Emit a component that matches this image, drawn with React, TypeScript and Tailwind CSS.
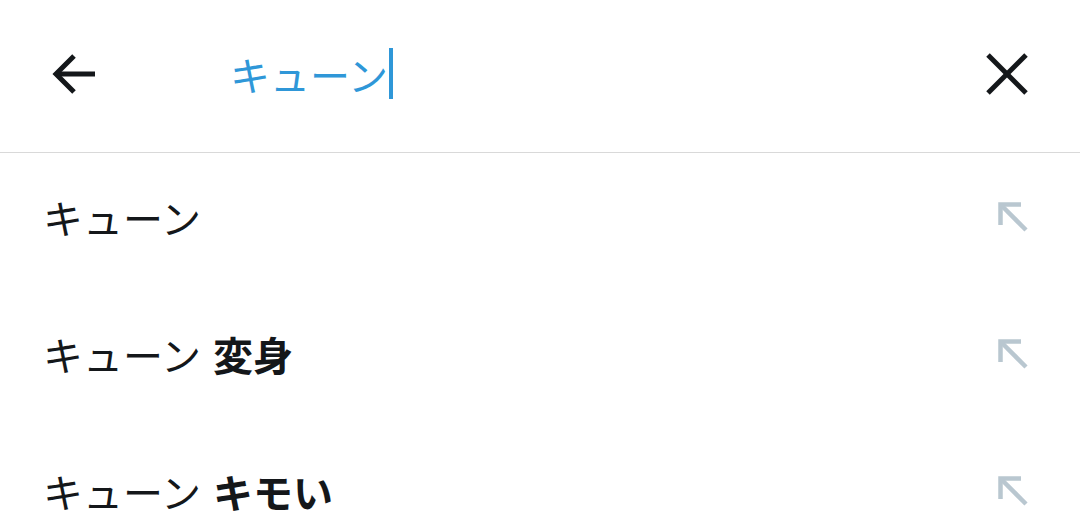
const suggestions: { base: string; extra?: string }[] = [
  { base: 'キューン' },
  { base: 'キューン', extra: '変身' },
  { base: 'キューン', extra: 'キモい' },
];

const font = { fontFamily: '"Noto Sans CJK JP", "Noto Sans", sans-serif' };

function ArrowUpLeft() {
  return (
    <svg width="32" height="32" viewBox="0 0 32 32" fill="none" stroke="#b9c7d0" strokeWidth="4.5">
      <path d="M3.5 24V3.5H24" />
      <path d="M3.5 3.5L29 29" />
    </svg>
  );
}

export default function App() {
  return (
    <div className="h-[512px] w-[1080px] overflow-hidden bg-white" style={font}>
      <header className="flex h-[153px] items-center border-b border-[#d9d9d9] pb-[5px]">
        <button type="button" className="ml-[51px] flex h-[46px] w-[46px] items-center justify-center">
          <svg width="46" height="46" viewBox="0 0 46 46" fill="none" stroke="#14171a" strokeWidth="5">
            <path d="M44 23H5" />
            <path d="M23 5L5 23l18 18" />
          </svg>
        </button>
        <div className="ml-[133px] flex flex-1 items-center">
          <span className="text-[40px] leading-none text-[#2f97d8]">キューン</span>
          <span className="ml-[1px] h-[51px] w-[4px] bg-[#2f97d8]" />
        </div>
        <button type="button" className="mr-[52px] flex h-[42px] w-[42px] items-center justify-center">
          <svg width="42" height="42" viewBox="0 0 42 42" fill="none" stroke="#14171a" strokeWidth="5">
            <path d="M2 2l38 38" />
            <path d="M40 2L2 40" />
          </svg>
        </button>
      </header>
      <ul>
        {suggestions.map((item, i) => (
          <li key={i} className="flex h-[137px] items-center justify-between pb-[9px] pl-[43px] pr-[51px]">
            <span className="text-[40px] leading-none text-[#14171a]">
              {item.base}
              {item.extra && <b className="ml-[12px] font-bold">{item.extra}</b>}
            </span>
            <ArrowUpLeft />
          </li>
        ))}
      </ul>
    </div>
  );
}
